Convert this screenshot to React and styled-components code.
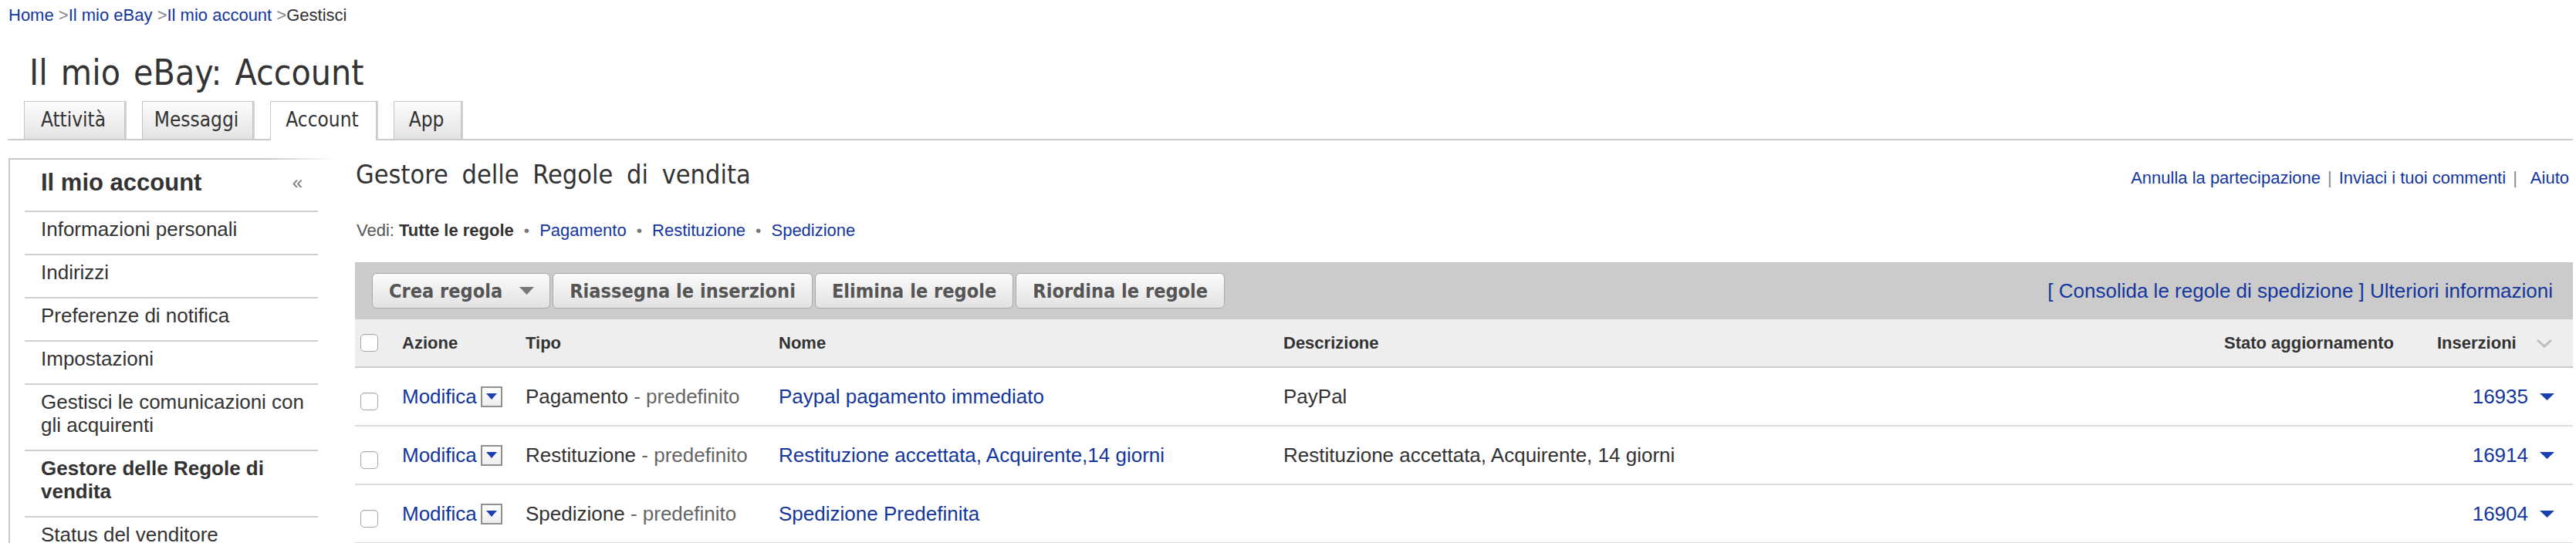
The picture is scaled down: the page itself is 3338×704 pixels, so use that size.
import React from "react";
import styled, { createGlobalStyle } from "styled-components";

const LINK = "#13369f";
const TAHOMA = `"DejaVu Sans Condensed", "DejaVu Sans", Verdana, sans-serif`;
const ARIAL = `"Liberation Sans", Arial, Helvetica, sans-serif`;

const GlobalStyle = createGlobalStyle`
  html, body { margin: 0; padding: 0; background: #fff; }
  body { font-family: ${ARIAL}; color: #333; overflow: hidden; }
  a { color: ${LINK}; text-decoration: none; }
`;

const Page = styled.div`
  width: 3338px;
  box-sizing: border-box;
  padding: 0 4px 0 10px;
`;

const Crumbs = styled.div`
  padding: 7px 0 0 1px;
  font-size: 22px;
  line-height: 26px;
  color: #333;
`;

const CrumbSep = styled.span`
  color: #888;
`;

const PageTitle = styled.h1`
  margin: 36px 0 0 28px;
  font-family: ${TAHOMA};
  font-weight: normal;
  font-size: 46px;
  line-height: 50px;
  word-spacing: 4px;
  color: #333;
`;

const TabBar = styled.div`
  margin-top: 12px;
  display: flex;
  align-items: flex-end;
  gap: 22px;
  padding-left: 21px;
  border-bottom: 2px solid #ccc;
`;

const Tab = styled.div`
  width: ${(p) => p.$w}px;
  box-sizing: border-box;
  text-align: center;
  padding-right: 3px;
  font-family: ${TAHOMA};
  font-size: 26px;
  line-height: 30px;
  color: #333;
  padding-top: 8px;
  padding-bottom: ${(p) => (p.$active ? "12px" : "10px")};
  margin-bottom: ${(p) => (p.$active ? "-2px" : "0")};
  border: 1px solid #c4c4c4;
  border-bottom: none;
  box-shadow: 2px 0 0 #d2d2d2;
  background: ${(p) =>
    p.$active ? "#fff" : "linear-gradient(#fdfdfd, #e3e3e3)"};
`;

const Body = styled.div`
  display: flex;
  align-items: flex-start;
  margin-top: 23px;
`;

const Sidebar = styled.aside`
  width: 421px;
  min-height: 520px;
  margin-left: 1px;
  box-sizing: border-box;
  padding: 0 20px 0 19px;
  border-top: 2px solid #c8c8c8;
  border-left: 2px solid #c8c8c8;
  border-image: linear-gradient(to right, #c8c8c8 80%, #fff) 1;
`;

const SideHead = styled.div`
  display: flex;
  align-items: center;
  justify-content: space-between;
  padding: 12px 20px 18px 21px;
  font-size: 31px;
  line-height: 36px;
  font-weight: bold;
  color: #333;
`;

const Collapse = styled.span`
  font-size: 24px;
  font-weight: normal;
  color: #777;
`;

const SideItem = styled.div`
  border-top: 2px solid #cfcfcf;
  padding: 7px 0 17px 21px;
  font-size: 26px;
  line-height: 30px;
  color: #333;
  font-weight: ${(p) => (p.$current ? "bold" : "normal")};
`;

const Main = styled.main`
  flex: 1;
  margin-left: 28px;
  padding-top: 3px;
  min-width: 0;
`;

const MainHeader = styled.div`
  display: flex;
  align-items: baseline;
  justify-content: space-between;
`;

const MainTitle = styled.h2`
  margin: 0 0 0 1px;
  font-family: ${TAHOMA};
  font-weight: normal;
  font-size: 34px;
  line-height: 36px;
  word-spacing: 8px;
  color: #333;
`;

const TopLinks = styled.div`
  font-size: 22px;
  padding-right: 5px;
  white-space: nowrap;
`;

const Pipe = styled.span`
  color: #888;
  margin: 0 ${(p) => (p.$wide ? "17px" : "9px")} 0 9px;
`;

const Filter = styled.div`
  margin: 43px 0 0 2px;
  font-size: 22px;
  line-height: 24px;
  color: #555;
  b {
    color: #333;
  }
`;

const Dot = styled.span`
  color: #777;
  margin: 0 13px;
  font-size: 21px;
`;

const Toolbar = styled.div`
  margin-top: 29px;
  height: 74px;
  background: #cbcbcb;
  display: flex;
  align-items: center;
  justify-content: space-between;
  padding: 0 26px 0 22px;
`;

const ButtonGroup = styled.div`
  display: flex;
  gap: 3px;
`;

const Button = styled.div`
  height: 46px;
  box-sizing: border-box;
  display: flex;
  align-items: center;
  gap: 22px;
  padding: 0 ${(p) => (p.$menu ? "20px" : "21px")} 0 21px;
  border: 1px solid #a9a9a9;
  border-radius: 6px;
  background: linear-gradient(#fbfbfb, #e2e2e2);
  font-family: ${TAHOMA};
  font-weight: bold;
  font-size: 25.1px;
  color: #555;
  white-space: nowrap;
`;

const ToolLinks = styled.div`
  font-size: 26px;
  color: ${LINK};
  white-space: nowrap;
`;

const cols = "61px 160px 328px 654px 1fr 276px 176px";

const HeadRow = styled.div`
  display: grid;
  grid-template-columns: ${cols};
  align-items: center;
  height: 61px;
  background: #eee;
  border-bottom: 2px solid #ccc;
  font-size: 22px;
  font-weight: bold;
  color: #333;
`;

const Row = styled.div`
  display: grid;
  grid-template-columns: ${cols};
  align-items: center;
  height: 74px;
  border-bottom: 2px solid #ddd;
  font-size: 26px;
  color: #333;
`;

const Check = styled.span`
  display: block;
  width: 23px;
  height: 23px;
  box-sizing: border-box;
  margin: ${(p) => (p.$row ? "12px" : "0")} 0 0 7px;
  border: 1.5px solid #a8a8a8;
  border-radius: 5px;
  background: #fff;
  box-shadow: inset 0 1px 1px rgba(0, 0, 0, 0.08);
`;

const ActionCell = styled.div`
  display: flex;
  align-items: center;
  gap: 5px;
`;

const DropBox = styled.span`
  width: 28px;
  height: 27px;
  box-sizing: border-box;
  border: 2px solid #8f8f8f;
  background: linear-gradient(#fff, #eee);
  display: flex;
  justify-content: center;
  padding-top: 7px;
`;

const Muted = styled.span`
  color: #666;
`;

const CountCell = styled.div`
  display: flex;
  align-items: center;
  justify-content: flex-end;
  gap: 15px;
  padding-right: 24px;
`;

const SortCell = styled.div`
  display: flex;
  align-items: center;
  justify-content: space-between;
  padding-right: 26px;
`;

const Caret = ({ color = "#666", w = 18, h = 10 }) => (
  <svg width={w} height={h} viewBox="0 0 18 10" preserveAspectRatio="none">
    <polygon points="0,0 18,0 9,10" fill={color} />
  </svg>
);

const tabs = [
  { label: "Attività", w: 131 },
  { label: "Messaggi", w: 144 },
  { label: "Account", w: 138, active: true },
  { label: "App", w: 88 },
];

const rules = [
  {
    type: "Pagamento",
    name: "Paypal pagamento immediato",
    desc: "PayPal",
    count: 16935,
  },
  {
    type: "Restituzione",
    name: "Restituzione accettata, Acquirente,14 giorni",
    desc: "Restituzione accettata, Acquirente, 14 giorni",
    count: 16914,
  },
  {
    type: "Spedizione",
    name: "Spedizione Predefinita",
    desc: "",
    count: 16904,
  },
];

const sideItems = [
  "Informazioni personali",
  "Indirizzi",
  "Preferenze di notifica",
  "Impostazioni",
  "Gestisci le comunicazioni con gli acquirenti",
  "Gestore delle Regole di vendita",
  "Status del venditore",
];

export default function App() {
  return (
    <Page>
      <GlobalStyle />
      <Crumbs>
        <a href="#">Home</a> <CrumbSep>&gt;</CrumbSep>
        <a href="#">Il mio eBay</a> <CrumbSep>&gt;</CrumbSep>
        <a href="#">Il mio account</a> <CrumbSep>&gt;</CrumbSep>Gestisci
      </Crumbs>

      <PageTitle>Il mio eBay: Account</PageTitle>

      <TabBar>
        {tabs.map((t) => (
          <Tab key={t.label} $w={t.w} $active={t.active}>
            {t.label}
          </Tab>
        ))}
      </TabBar>

      <Body>
        <Sidebar>
          <SideHead>
            Il mio account <Collapse>«</Collapse>
          </SideHead>
          {sideItems.map((item) => (
            <SideItem key={item} $current={item.startsWith("Gestore")}>
              {item}
            </SideItem>
          ))}
        </Sidebar>

        <Main>
          <MainHeader>
            <MainTitle>Gestore delle Regole di vendita</MainTitle>
            <TopLinks>
              <a href="#">Annulla la partecipazione</a>
              <Pipe>|</Pipe>
              <a href="#">Inviaci i tuoi commenti</a>
              <Pipe $wide>|</Pipe>
              <a href="#">Aiuto</a>
            </TopLinks>
          </MainHeader>

          <Filter>
            Vedi: <b>Tutte le regole</b>
            <Dot>•</Dot>
            <a href="#">Pagamento</a>
            <Dot>•</Dot>
            <a href="#">Restituzione</a>
            <Dot>•</Dot>
            <a href="#">Spedizione</a>
          </Filter>

          <Toolbar>
            <ButtonGroup>
              <Button $menu>
                Crea regola <Caret color="#777" w={19} h={10} />
              </Button>
              <Button>Riassegna le inserzioni</Button>
              <Button>Elimina le regole</Button>
              <Button>Riordina le regole</Button>
            </ButtonGroup>
            <ToolLinks>
              <a href="#">[ Consolida le regole di spedizione ]</a>{" "}
              <a href="#">Ulteriori informazioni</a>
            </ToolLinks>
          </Toolbar>

          <HeadRow>
            <Check />
            <div>Azione</div>
            <div>Tipo</div>
            <div>Nome</div>
            <div>Descrizione</div>
            <div>Stato aggiornamento</div>
            <SortCell>
              Inserzioni
              <svg width="22" height="12" viewBox="0 0 22 12">
                <polyline
                  points="2,2 11,10 20,2"
                  fill="none"
                  stroke="#bdbdbd"
                  strokeWidth="3"
                />
              </svg>
            </SortCell>
          </HeadRow>

          {rules.map((r) => (
            <Row key={r.count}>
              <Check $row />
              <ActionCell>
                <a href="#">Modifica</a>
                <DropBox>
                  <Caret color="#1a3fb0" w={14} h={8} />
                </DropBox>
              </ActionCell>
              <div>
                {r.type} <Muted>- predefinito</Muted>
              </div>
              <div>
                <a href="#">{r.name}</a>
              </div>
              <div>{r.desc}</div>
              <div />
              <CountCell>
                <a href="#">{r.count}</a>
                <Caret color="#1a3fb0" w={19} h={9} />
              </CountCell>
            </Row>
          ))}
        </Main>
      </Body>
    </Page>
  );
}
